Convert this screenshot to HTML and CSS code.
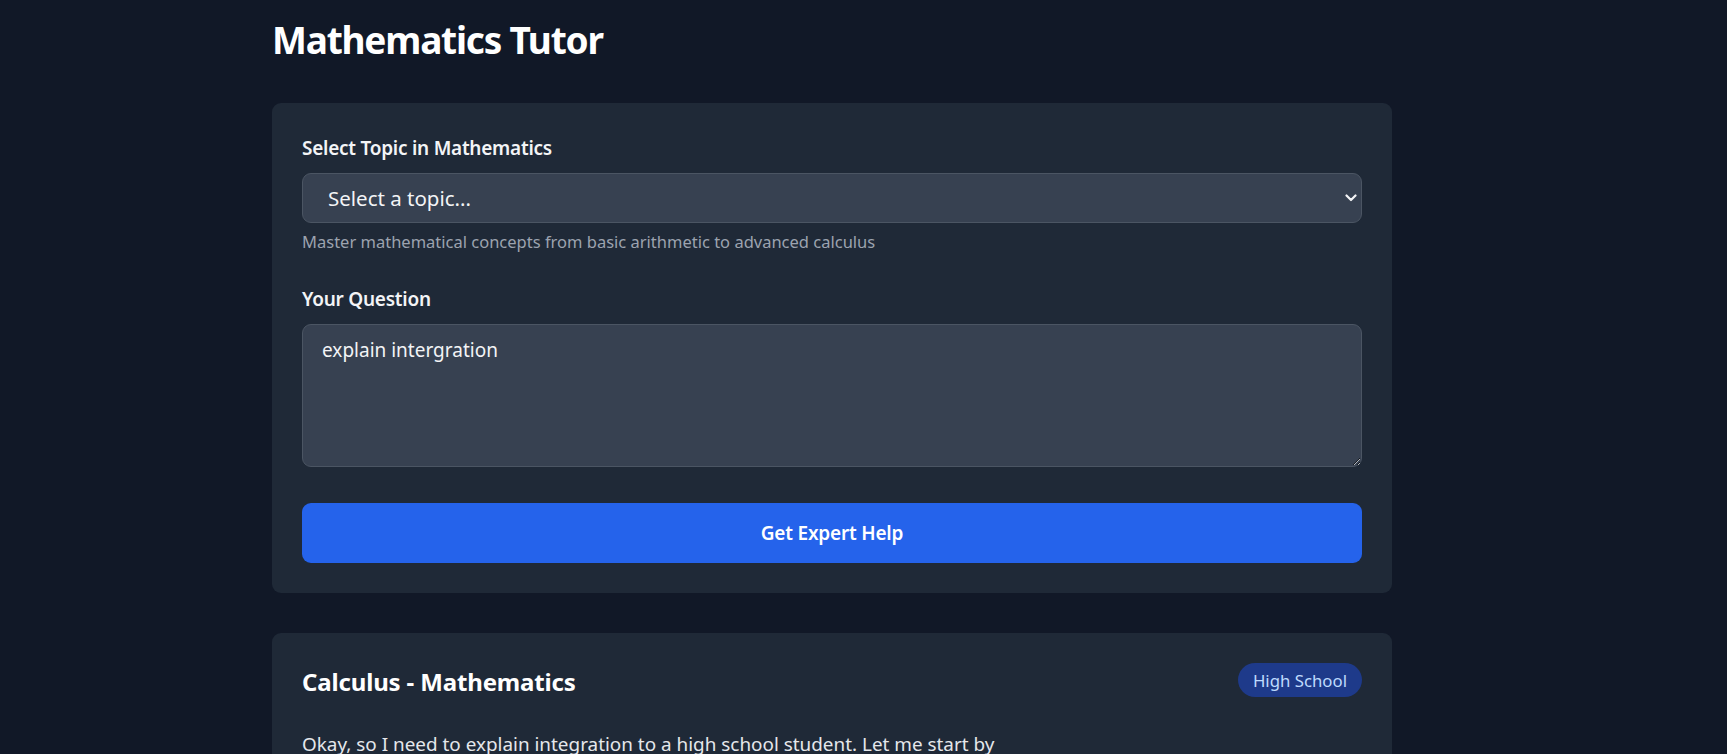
FILE: index.html
```html
<!DOCTYPE html>
<html lang="en">
<head>
<meta charset="utf-8">
<title>Mathematics Tutor</title>
<link rel="stylesheet" href="styles.css">
</head>
<body>
<main class="page">
  <h1 class="page-title">Mathematics Tutor</h1>

  <section class="card form-card">
    <div class="field field-topic">
      <label class="field-label" for="topic">Select Topic in Mathematics</label>
      <div class="select-wrap">
        <select id="topic" class="select">
          <option>Select a topic...</option>
        </select>
        <svg class="chevron" viewBox="0 0 12 8" width="12" height="8" aria-hidden="true">
          <path d="M1.5 1.5 L6 6 L10.5 1.5" fill="none" stroke="#f3f4f6" stroke-width="2.2" stroke-linecap="round" stroke-linejoin="round"/>
        </svg>
      </div>
      <p class="field-help">Master mathematical concepts from basic arithmetic to advanced calculus</p>
    </div>

    <div class="field">
      <label class="field-label" for="question">Your Question</label>
      <textarea id="question" class="textarea">explain intergration</textarea>
    </div>

    <button class="submit" type="button">Get Expert Help</button>
  </section>

  <section class="card answer-card">
    <header class="answer-head">
      <h2 class="answer-title">Calculus - Mathematics</h2>
      <span class="badge">High School</span>
    </header>
    <p class="answer-text">Okay, so I need to explain integration to a high school student. Let me start by</p>
  </section>
</main>
</body>
</html>
```

FILE: styles.css
```css
* { box-sizing: border-box; }

html, body {
  margin: 0;
  padding: 0;
  background: #111827;
}

body {
  font-family: "Noto Sans", "Open Sans", "Liberation Sans", sans-serif;
  color: #f3f4f6;
  overflow: hidden;
}

.page {
  width: 1120px;
  margin-left: 272px;
  padding-top: 18px;
}

.page-title {
  margin: 0 0 41px;
  font-size: 37px;
  line-height: 44px;
  font-weight: 700;
  color: #ffffff;
  letter-spacing: -1.2px;
}

.card {
  background: #1f2937;
  border-radius: 9px;
}

.form-card {
  padding: 31px 30px 30px;
  margin-bottom: 40px;
}

.field-topic { margin-bottom: 31px; }

.field-label {
  display: block;
  font-size: 19px;
  line-height: 28px;
  font-weight: 600;
  letter-spacing: -0.25px;
  color: #f3f4f6;
  margin-bottom: 11px;
}

.select-wrap {
  position: relative;
}

.select {
  appearance: none;
  -webkit-appearance: none;
  display: block;
  width: 100%;
  height: 50px;
  padding: 0 40px 0 25px;
  background: #374151;
  border: 1px solid #4b5563;
  border-radius: 9px;
  color: #f3f4f6;
  font-family: inherit;
  font-size: 20.5px;
}

.chevron {
  position: absolute;
  right: 5px;
  top: 21px;
  width: 12px;
  height: 8px;
  pointer-events: none;
}

.field-help {
  margin: 6.5px 0 0;
  font-size: 16.5px;
  line-height: 24px;
  color: #9ca3af;
}

.textarea {
  display: block;
  width: 100%;
  height: 143px;
  padding: 11px 19px;
  background: #374151;
  border: 1px solid #4b5563;
  border-radius: 9px;
  color: #f3f4f6;
  font-family: inherit;
  font-size: 19px;
  line-height: 28px;
  resize: vertical;
}

.submit {
  display: block;
  width: 100%;
  height: 60px;
  margin-top: 36px;
  border: 0;
  border-radius: 9px;
  background: #2563eb;
  color: #ffffff;
  font-family: inherit;
  font-size: 19px;
  font-weight: 600;
  letter-spacing: -0.2px;
}

.answer-card {
  padding: 30px 30px 30px;
}

.answer-head {
  display: flex;
  align-items: center;
  justify-content: space-between;
}

.answer-title {
  margin: 3px 0 0;
  font-size: 24px;
  line-height: 32px;
  font-weight: 700;
  letter-spacing: -0.15px;
  color: #ffffff;
}

.badge {
  display: inline-flex;
  align-items: center;
  height: 34px;
  padding: 0 15px;
  border-radius: 999px;
  background: #1e3a8a;
  color: #bfdbfe;
  font-size: 16.8px;
}

.answer-text {
  margin: 32px 0 0;
  font-size: 18.9px;
  line-height: 28px;
  color: #e5e7eb;
}
```
